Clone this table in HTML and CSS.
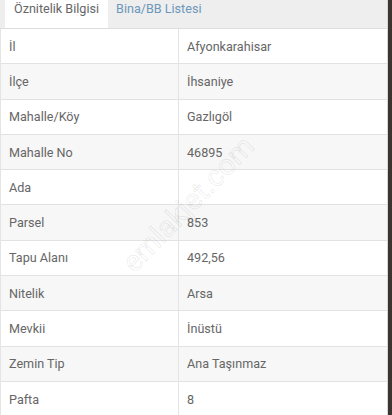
FILE: index.html
```html
<!DOCTYPE html>
<html lang="tr">
<head>
<meta charset="utf-8">
<title>Öznitelik Bilgisi</title>
<link rel="stylesheet" href="styles.css">
</head>
<body>
<div class="panel">
  <div class="tabs">
    <div class="tab active">Öznitelik Bilgisi</div>
    <div class="tab">Bina/BB Listesi</div>
  </div>
  <div class="table">
    <div class="row"><div class="key">İl</div><div class="val">Afyonkarahisar</div></div>
    <div class="row"><div class="key">İlçe</div><div class="val">İhsaniye</div></div>
    <div class="row"><div class="key">Mahalle/Köy</div><div class="val">Gazlıgöl</div></div>
    <div class="row"><div class="key">Mahalle No</div><div class="val">46895</div></div>
    <div class="row"><div class="key">Ada</div><div class="val"></div></div>
    <div class="row"><div class="key">Parsel</div><div class="val">853</div></div>
    <div class="row"><div class="key">Tapu Alanı</div><div class="val">492,56</div></div>
    <div class="row"><div class="key">Nitelik</div><div class="val">Arsa</div></div>
    <div class="row"><div class="key">Mevkii</div><div class="val">İnüstü</div></div>
    <div class="row"><div class="key">Zemin Tip</div><div class="val">Ana Taşınmaz</div></div>
    <div class="row"><div class="key">Pafta</div><div class="val">8</div></div>
  </div>
  <div class="watermark">emlakjet.com</div>
</div>
</body>
</html>
```
FILE: styles.css
```css
html, body {
  margin: 0;
  padding: 0;
  height: 100%;
  overflow: hidden;
}
body {
  background: #3b3431;
  font-family: Roboto, "Liberation Sans", sans-serif;
  font-size: 12.6px;
  color: #666666;
}
.panel {
  position: relative;
  width: 387px;
  min-height: 100%;
  background: #ffffff;
  border-right: 1px solid #d6d6d6;
  overflow: hidden;
}
.tabs {
  display: flex;
  height: 28px;
  background: #eeeeee;
  border-bottom: 1px solid #dddddd;
  padding-left: 5px;
}
.tab {
  white-space: nowrap;
  line-height: 17px;
  padding: 0 8px 11px 8px;
  color: #6d97bb;
}
.tab.active {
  padding: 0 9px 11px 9px;
  background: #ffffff;
  color: #666666;
}
.table {
  border-left: 1px solid #e4e4e4;
}
.row {
  display: grid;
  grid-template-columns: 178px 1fr;
  height: 35.3px;
  box-sizing: border-box;
  border-bottom: 1px solid #e2e2e2;
}
.row:nth-child(even) {
  background: #f7f7f7;
}
.key, .val {
  display: flex;
  align-items: center;
  padding-left: 8px;
}
.key {
  border-right: 1px solid #e4e4e4;
}
.watermark {
  position: absolute;
  left: 188px;
  top: 204px;
  transform: translate(-50%, -50%) rotate(-46deg);
  font-size: 29px;
  white-space: nowrap;
  color: rgba(0, 0, 0, 0.01);
  -webkit-text-stroke: 1px rgba(0, 0, 0, 0.08);
  pointer-events: none;
}
```
